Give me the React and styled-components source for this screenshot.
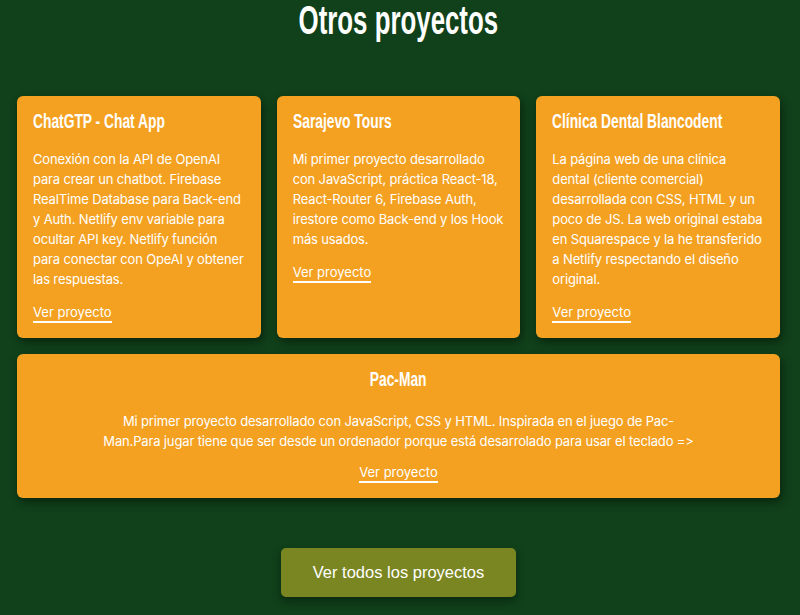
import React from "react";
import styled, { createGlobalStyle } from "styled-components";

const projects = [
  {
    title: "ChatGTP - Chat App",
    text: "Conexión con la API de OpenAI para crear un chatbot. Firebase RealTime Database para Back-end y Auth. Netlify env variable para ocultar API key. Netlify función para conectar con OpeAI y obtener las respuestas.",
  },
  {
    title: "Sarajevo Tours",
    text: "Mi primer proyecto desarrollado con JavaScript, práctica React-18, React-Router 6, Firebase Auth, irestore como Back-end y los Hook más usados.",
  },
  {
    title: "Clínica Dental Blancodent",
    text: "La página web de una clínica dental (cliente comercial) desarrollada con CSS, HTML y un poco de JS. La web original estaba en Squarespace y la he transferido a Netlify respectando el diseño original.",
  },
  {
    title: "Pac-Man",
    text: "Mi primer proyecto desarrollado con JavaScript, CSS y HTML. Inspirada en el juego de Pac-Man.Para jugar tiene que ser desde un ordenador porque está desarrolado para usar el teclado =>",
    wide: true,
  },
];

const App = () => {
  return (
    <Page>
      <GlobalStyle />
      <Heading>
        <span>Otros proyectos</span>
      </Heading>
      <Grid>
        {projects.map((p) => (
          <Card key={p.title} $wide={p.wide}>
            <CardTitle $wide={p.wide}>
              <span>{p.title}</span>
            </CardTitle>
            <CardText $wide={p.wide}>{p.text}</CardText>
            <div>
              <ProjectLink href="#">Ver proyecto</ProjectLink>
            </div>
          </Card>
        ))}
      </Grid>
      <Footer>
        <AllButton>Ver todos los proyectos</AllButton>
      </Footer>
    </Page>
  );
};

const GlobalStyle = createGlobalStyle`
  html, body {
    margin: 0;
    background: #10411a;
  }
  body {
    font-family: Inter, "Noto Sans", sans-serif;
    font-variant-ligatures: none;
    font-feature-settings: "calt" 0, "liga" 0;
  }
`;

const Page = styled.main`
  min-height: 615px;
  background: #10411a;
  padding: 0 20px 0 17px;
  box-sizing: border-box;
`;

const Heading = styled.h2`
  margin: 0 0 55px;
  text-align: center;
  color: #fff;
  font-family: "Liberation Sans", Arial, sans-serif;
  font-weight: 700;
  font-size: 41px;
  line-height: 41px;
  span {
    display: inline-block;
    transform: scaleX(0.63);
  }
`;

const Grid = styled.section`
  display: grid;
  grid-template-columns: repeat(3, minmax(0, 1fr));
  gap: 16px;
`;

const Card = styled.article`
  grid-column: ${(p) => (p.$wide ? "1 / -1" : "auto")};
  background: #f4a122;
  border-radius: 6px;
  padding: 13px 16px 15px;
  color: #fff;
  box-shadow: 2px 4px 10px rgba(0, 0, 0, 0.45);
  text-align: ${(p) => (p.$wide ? "center" : "left")};
`;

const CardTitle = styled.h3`
  margin: 0 0 ${(p) => (p.$wide ? "20px" : "16px")};
  font-family: "Liberation Sans", Arial, sans-serif;
  font-weight: 700;
  font-size: 20px;
  line-height: 24px;
  white-space: nowrap;
  span {
    display: inline-block;
    transform: scaleX(0.69);
    transform-origin: ${(p) => (p.$wide ? "center" : "left")};
  }
`;

const CardText = styled.p`
  margin: ${(p) => (p.$wide ? "0 auto 10px" : "0 0 12px")};
  max-width: ${(p) => (p.$wide ? "600px" : "none")};
  font-size: 13px;
  line-height: 20px;
  letter-spacing: -0.15px;
`;

const ProjectLink = styled.a`
  display: inline-block;
  color: #fff;
  text-decoration: none;
  font-size: 13px;
  line-height: 17px;
  border-bottom: 2px solid #fff;
`;

const Footer = styled.div`
  display: flex;
  justify-content: center;
  padding-top: 50px;
`;

const AllButton = styled.button`
  height: 49px;
  padding: 0 32px;
  border: none;
  border-radius: 5px;
  background: #7a8622;
  color: #fff;
  font-family: "Liberation Sans", Arial, sans-serif;
  font-size: 16.5px;
  box-shadow: 0 4px 10px rgba(0, 0, 0, 0.4);
  cursor: pointer;
`;

export default App;
